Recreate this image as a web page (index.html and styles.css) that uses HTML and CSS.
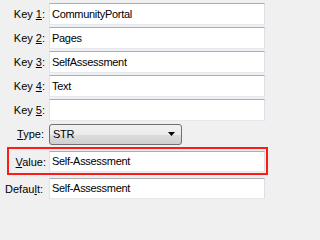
FILE: index.html
```html
<!DOCTYPE html>
<html>
<head>
<meta charset="utf-8">
<link rel="stylesheet" href="styles.css">
</head>
<body>
<div class="form">
  <div class="row">
    <label class="lbl">Key <u>1</u>:</label>
    <div class="field">CommunityPortal</div>
  </div>
  <div class="row">
    <label class="lbl">Key <u>2</u>:</label>
    <div class="field">Pages</div>
  </div>
  <div class="row">
    <label class="lbl">Key <u>3</u>:</label>
    <div class="field">SelfAssessment</div>
  </div>
  <div class="row">
    <label class="lbl">Key <u>4</u>:</label>
    <div class="field">Text</div>
  </div>
  <div class="row">
    <label class="lbl">Key <u>5</u>:</label>
    <div class="field"></div>
  </div>
  <div class="row">
    <label class="lbl lbl-type"><u>T</u>ype:</label>
    <div class="select">
      <span>STR</span>
      <svg class="arrow" width="7" height="4" viewBox="0 0 7 4"><path d="M0 0H7L3.5 4Z" fill="#000"/></svg>
    </div>
  </div>
  <div class="highlight">
    <label class="lbl lbl-value"><u>V</u>alue:</label>
    <div class="field field-value">Self-Assessment</div>
  </div>
  <div class="row row-default">
    <label class="lbl lbl-default">Defau<u>l</u>t:</label>
    <div class="field field-value">Self-Assessment</div>
  </div>
</div>
</body>
</html>
```

FILE: styles.css
```css
html {
  background: #f0f0f0;
}

body {
  margin: 0;
  padding: 0;
  width: 270px;
  height: 201px;
  overflow: hidden;
}

.form {
  font-family: "Liberation Sans", Arial, sans-serif;
  font-size: 11px;
  color: #000;
  padding: 3px 0 0 0;
  display: flex;
  flex-direction: column;
  gap: 2px;
}

.row {
  display: grid;
  grid-template-columns: 49px 216px;
  align-items: center;
  height: 22px;
}

.lbl {
  text-align: right;
  padding-right: 4px;
  white-space: nowrap;
}

.lbl u {
  text-decoration: underline;
  text-underline-offset: 1px;
}

.lbl-type { padding-right: 5px; }

.field {
  box-sizing: border-box;
  height: 22px;
  background: #fff;
  border: 1px solid;
  border-color: #abadb3 #dbdfe6 #e3e9ef #e2e3ea;
  padding: 0 2px;
  line-height: 20px;
  letter-spacing: -0.3px;
  white-space: nowrap;
  overflow: hidden;
}

.select {
  box-sizing: border-box;
  width: 133px;
  height: 21px;
  border: 1px solid #707070;
  border-radius: 3px;
  background: linear-gradient(#f2f2f2 0%, #ebebeb 50%, #dddddd 51%, #cfcfcf 100%);
  display: flex;
  align-items: center;
  justify-content: space-between;
  padding: 0 6px 0 3px;
  letter-spacing: -0.3px;
}

.arrow { display: block; }

.highlight {
  display: grid;
  grid-template-columns: 40px 216px;
  align-items: center;
  margin: 0 2px 0 7px;
  border: 2px solid #ff1a1a;
  padding: 2px 1px 1px 0;
}

.lbl-value { padding-right: 3px; }

.field-value { height: 21px; line-height: 19px; }

.row-default { margin-top: 1px; height: 21px; }

.lbl-default { padding-right: 6px; }
```
